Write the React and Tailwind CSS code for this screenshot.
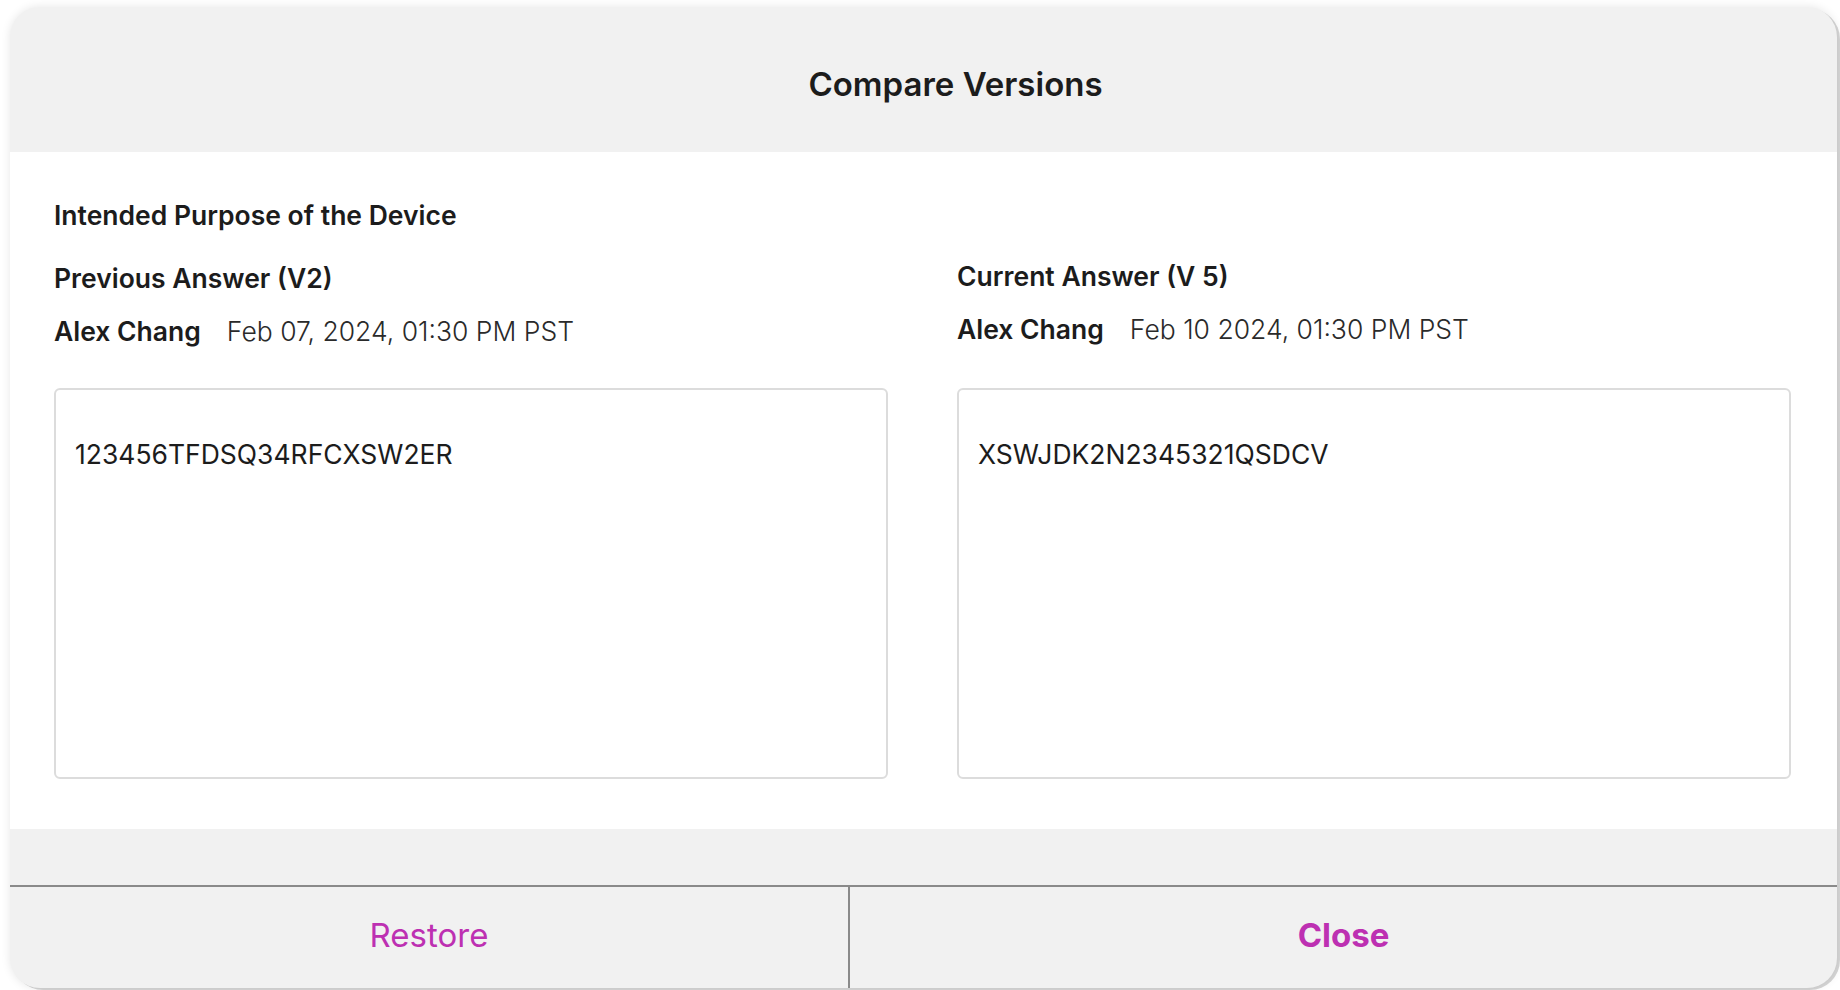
import React from 'react';

const versions = [
  {
    label: 'Previous Answer (V2)',
    author: 'Alex Chang',
    date: 'Feb 07, 2024, 01:30 PM PST',
    answer: '123456TFDSQ34RFCXSW2ER',
    lift: false,
  },
  {
    label: 'Current Answer (V 5)',
    author: 'Alex Chang',
    date: 'Feb 10 2024, 01:30 PM PST',
    answer: 'XSWJDK2N2345321QSDCV',
    lift: true,
  },
];

const VersionColumn = ({ version }) => (
  <div className="flex flex-col">
    <div className={version.lift ? '-mt-[2px] mb-[2px]' : ''}>
      <h3 className="text-[26.5px] leading-8 font-semibold text-[#1c1c1c]">{version.label}</h3>
      <div className="mt-[21px] flex items-center gap-[26px] text-[26.5px] leading-8">
        <span className="font-semibold text-[#1c1c1c]">{version.author}</span>
        <span className="font-light text-[#2a2a2a]">{version.date}</span>
      </div>
    </div>
    <div className="mt-[41px] h-[391px] rounded-md border-2 border-[#dcdcdc] bg-white px-[19px] pt-[48px]">
      <p className="text-[26.5px] leading-8 text-[#1c1c1c]">{version.answer}</p>
    </div>
  </div>
);

export default function App() {
  return (
    <div
      className="min-h-[990px] w-full overflow-hidden bg-white pt-[7px] pl-[10px] pr-[3px]"
      style={{ fontFamily: 'Inter, "Noto Sans", sans-serif' }}
    >
      <div className="flex h-[981px] flex-col overflow-hidden rounded-[30px] bg-[#f1f1f1] shadow-[0_0_10px_rgba(0,0,0,0.10),3px_2px_0_rgba(0,0,0,0.16)]">
        {/* header */}
        <div className="flex h-[145px] shrink-0 items-center justify-center pt-[10px] pl-16">
          <h2 className="text-[33px] font-semibold text-[#1c1c1c]">Compare Versions</h2>
        </div>

        {/* body */}
        <div className="shrink-0 bg-white px-[44px] pt-[47px] pb-[50px]">
          <h3 className="text-[26.5px] leading-8 font-semibold text-[#1c1c1c]">
            Intended Purpose of the Device
          </h3>
          <div className="mt-[31px] grid grid-cols-[834px_834px] gap-[69px]">
            {versions.map((v) => (
              <VersionColumn key={v.label} version={v} />
            ))}
          </div>
        </div>

        {/* footer */}
        <div className="h-[56px] shrink-0" />
        <div className="grid flex-1 grid-cols-[840px_1fr] border-t-2 border-[#8a8a8a]">
          <button className="flex items-center justify-center border-r-2 border-[#8a8a8a] pb-1 text-[33px] text-[#bd30b2]">
            Restore
          </button>
          <button className="flex items-center justify-center pb-1 text-[33px] font-bold text-[#bd30b2]">
            Close
          </button>
        </div>
      </div>
    </div>
  );
}
